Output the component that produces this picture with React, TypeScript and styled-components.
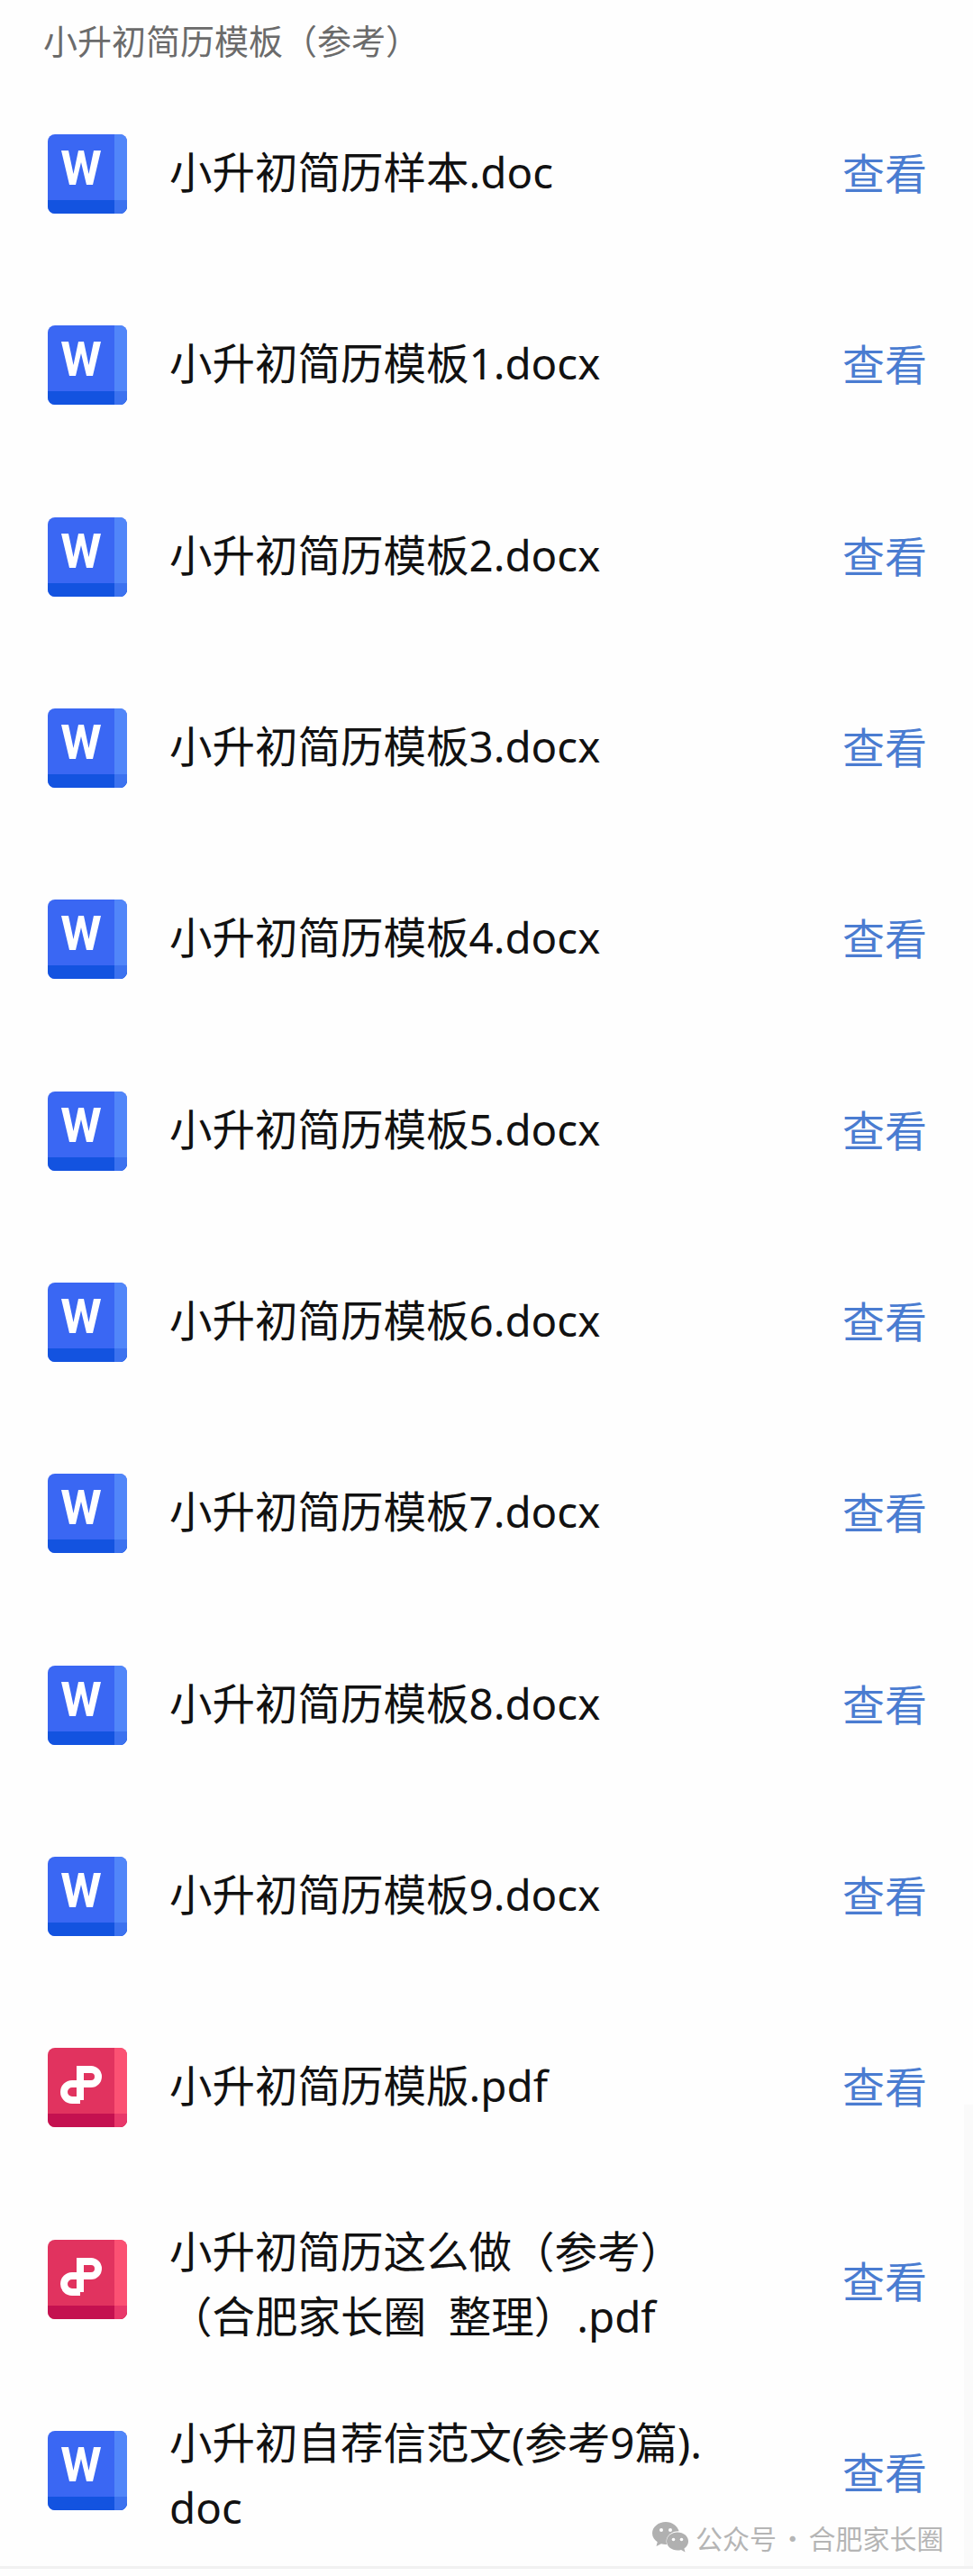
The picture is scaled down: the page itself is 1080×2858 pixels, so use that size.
import React from 'react';
import styled, { createGlobalStyle } from 'styled-components';

const GlobalStyle = createGlobalStyle`
  html, body {
    margin: 0;
    padding: 0;
    background: #fefefe;
  }
  body {
    font-family: "Noto Sans", "Noto Sans CJK SC", sans-serif;
  }
`;

const Page = styled.div`
  position: relative;
  width: 1080px;
  height: 2858px;
  box-sizing: border-box;
  padding-top: 18px;
  overflow: hidden;
`;

const Heading = styled.div`
  padding-left: 48px;
  height: 52px;
  font-family: "Noto Sans CJK SC", sans-serif;
  font-size: 38px;
  line-height: 52px;
  color: #6b6b6b;
`;

const List = styled.div`
  padding-top: 17px;
`;

const Row = styled.div`
  display: flex;
  align-items: center;
  height: 212.33px;
  padding-left: 53px;
`;

const FileIcon = styled.svg`
  flex: none;
  width: 88px;
  height: 88px;
`;

const Name = styled.div<{ $wrapped?: boolean }>`
  width: 600px;
  margin-left: 47px;
  margin-top: ${(p) => (p.$wrapped ? '10px' : '-4px')};
  font-size: 47.5px;
  line-height: 72px;
  color: #111111;
  word-break: break-all;
`;

const ViewLink = styled.a<{ $wrapped?: boolean }>`
  margin-left: auto;
  margin-right: 51px;
  margin-top: ${(p) => (p.$wrapped ? '0' : '-6px')};
  font-family: "Noto Sans CJK SC", sans-serif;
  font-size: 47px;
  line-height: 72px;
  color: #4a7cd1;
  text-decoration: none;
`;

const Watermark = styled.div`
  position: absolute;
  left: 724px;
  top: 2794px;
  display: flex;
  align-items: center;
  gap: 8px;
  font-family: "Noto Sans CJK SC", sans-serif;
  font-size: 30px;
  line-height: 42px;
  color: #b5b5b5;
  white-space: nowrap;
`;

const Dot = styled.span`
  margin: 0 -4px;
`;

const SideStrip = styled.div`
  position: absolute;
  left: 1070px;
  right: 0;
  top: 2335px;
  height: 512px;
  background: #fafafa;
`;

const BottomRule = styled.div`
  position: absolute;
  left: 0;
  right: 0;
  top: 2847px;
  height: 3px;
  background: #f1f1f1;
`;

function WordIcon() {
  return (
    <FileIcon viewBox="0 0 88 88">
      <path d="M8 0h72a8 8 0 0 1 8 8v72a8 8 0 0 1-8 8H8a8 8 0 0 1-8-8V8a8 8 0 0 1 8-8z" fill="#3a67f3" />
      <path d="M74 0h6a8 8 0 0 1 8 8v72a8 8 0 0 1-8 8h-6z" fill="#5186f9" />
      <path d="M0 73h88v7a8 8 0 0 1-8 8H8a8 8 0 0 1-8-8z" fill="#1353e0" />
      <path d="M74 73h14v7a8 8 0 0 1-8 8h-6z" fill="#3c72ef" />
      <path d="M15 18h8l5.500 26L34 18h6l5.500 26L51 18h8l-9 38h-7L37 31l-6 25h-7z" fill="#ffffff" />
    </FileIcon>
  );
}

function PdfIcon() {
  return (
    <FileIcon viewBox="0 0 88 88">
      <path d="M8 0h72a8 8 0 0 1 8 8v72a8 8 0 0 1-8 8H8a8 8 0 0 1-8-8V8a8 8 0 0 1 8-8z" fill="#e1335f" />
      <path d="M74 0h6a8 8 0 0 1 8 8v72a8 8 0 0 1-8 8h-6z" fill="#fb5173" />
      <path d="M0 73h88v7a8 8 0 0 1-8 8H8a8 8 0 0 1-8-8z" fill="#c41150" />
      <path d="M74 73h14v7a8 8 0 0 1-8 8h-6z" fill="#e8386a" />
      <path
        d="M36 58V24h12a8 8 0 0 1 0 16H27a9 9 0 0 0 0 18h9"
        fill="none"
        stroke="#ffffff"
        strokeWidth="8"
      />
    </FileIcon>
  );
}

function WeChatMark() {
  return (
    <svg width="40" height="34" viewBox="0 0 40 34">
      <path d="M15 0C7 0 0 5.500 0 12.500c0 4 2.200 7.400 5.700 9.700L4.500 27l5.400-2.800c1.600.5 3.300.8 5.100.8h1.200a11 11 0 0 1-.6-3.500C15.600 15 22 10 29.600 10.300 28 4.400 22 0 15 0z" fill="#b0b0b0" />
      <path d="M40 21.500C40 15.700 34.500 11.500 28 11.500s-12 4.200-12 10 5.500 10 12 10c1.400 0 2.800-.2 4-.6l4.500 2.600-1.100-4c2.800-1.900 4.600-4.800 4.600-8z" fill="#b0b0b0" />
      <circle cx="10" cy="9" r="2" fill="#fefefe" />
      <circle cx="20" cy="9" r="2" fill="#fefefe" />
      <circle cx="23.500" cy="19.500" r="1.800" fill="#fefefe" />
      <circle cx="32.500" cy="19.500" r="1.800" fill="#fefefe" />
    </svg>
  );
}

const files: { name: string; type: 'word' | 'pdf'; wrapped?: boolean }[] = [
  { name: '小升初简历样本.doc', type: 'word' },
  { name: '小升初简历模板1.docx', type: 'word' },
  { name: '小升初简历模板2.docx', type: 'word' },
  { name: '小升初简历模板3.docx', type: 'word' },
  { name: '小升初简历模板4.docx', type: 'word' },
  { name: '小升初简历模板5.docx', type: 'word' },
  { name: '小升初简历模板6.docx', type: 'word' },
  { name: '小升初简历模板7.docx', type: 'word' },
  { name: '小升初简历模板8.docx', type: 'word' },
  { name: '小升初简历模板9.docx', type: 'word' },
  { name: '小升初简历模版.pdf', type: 'pdf' },
  { name: '小升初简历这么做（参考）（合肥家长圈\u00a0\u00a0整理）.pdf', type: 'pdf', wrapped: true },
  { name: '小升初自荐信范文(参考9篇).doc', type: 'word', wrapped: true },
];

export default function App() {
  return (
    <Page>
      <GlobalStyle />
      <Heading>小升初简历模板（参考）</Heading>
      <List>
        {files.map((file) => (
          <Row key={file.name}>
            {file.type === 'word' ? <WordIcon /> : <PdfIcon />}
            <Name $wrapped={file.wrapped}>{file.name}</Name>
            <ViewLink $wrapped={file.wrapped}>查看</ViewLink>
          </Row>
        ))}
      </List>
      <Watermark>
        <WeChatMark />
        <span>公众号 <Dot>·</Dot> 合肥家长圈</span>
      </Watermark>
      <SideStrip />
      <BottomRule />
    </Page>
  );
}
